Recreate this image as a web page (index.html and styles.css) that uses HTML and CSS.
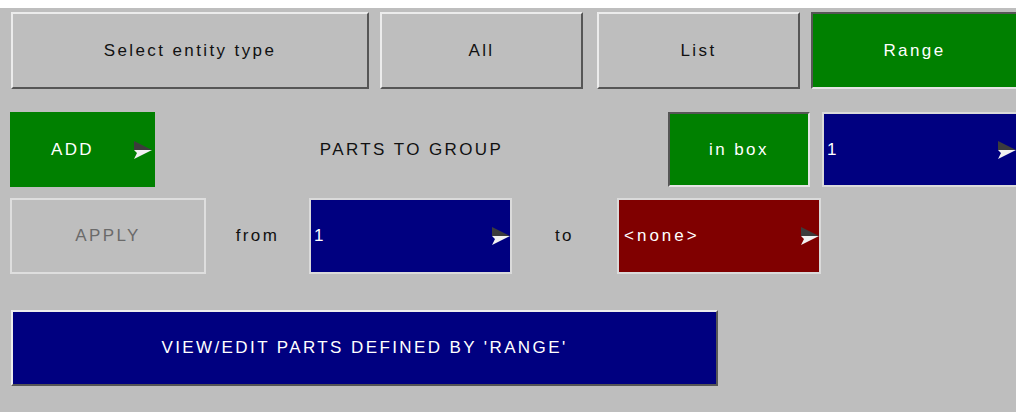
FILE: index.html
```html
<!DOCTYPE html>
<html>
<head>
<meta charset="utf-8">
<link rel="stylesheet" href="styles.css">
</head>
<body>
<div class="panel">
  <div class="row row-top">
    <div class="btn raised w-select">Select entity type</div>
    <div class="btn raised w-all">All</div>
    <div class="btn raised w-list">List</div>
    <div class="btn sunken green w-range">Range</div>
  </div>
  <div class="row row-add">
    <div class="btn green flat w-add"><span class="btn-label">ADD</span><svg class="arrow arrow-add" viewBox="0 0 20 20" width="20" height="20"><polygon points="1,1 19,10 1,10" fill="#3c3c3c"/><polygon points="1,10 19,10 1,19 4,13" fill="#f2f2f2"/></svg></div>
    <div class="label w-parts">PARTS TO GROUP</div>
    <div class="btn sunken-box green w-inbox">in box</div>
    <div class="field navy w-field-right"><span class="field-text">1</span><svg class="arrow" viewBox="0 0 20 20" width="20" height="20"><polygon points="1,1 19,10 1,10" fill="#3c3c3c"/><polygon points="1,10 19,10 1,19 4,13" fill="#f2f2f2"/></svg></div>
  </div>
  <div class="row row-apply">
    <div class="btn disabled w-apply">APPLY</div>
    <div class="label w-from">from</div>
    <div class="field navy w-from-field"><span class="field-text">1</span><svg class="arrow" viewBox="0 0 20 20" width="20" height="20"><polygon points="1,1 19,10 1,10" fill="#3c3c3c"/><polygon points="1,10 19,10 1,19 4,13" fill="#f2f2f2"/></svg></div>
    <div class="label w-to">to</div>
    <div class="field maroon w-to-field"><span class="field-text">&lt;none&gt;</span><svg class="arrow" viewBox="0 0 20 20" width="20" height="20"><polygon points="1,1 19,10 1,10" fill="#3c3c3c"/><polygon points="1,10 19,10 1,19 4,13" fill="#f2f2f2"/></svg></div>
  </div>
  <div class="row row-view">
    <div class="btn raised navy w-view">VIEW/EDIT PARTS DEFINED BY 'RANGE'</div>
  </div>
</div>
</body>
</html>
```

FILE: styles.css
```css
* { box-sizing: border-box; }

html, body {
  margin: 0;
  padding: 0;
  background: #ffffff;
  width: 1016px;
  height: 412px;
  overflow: hidden;
}

.panel {
  margin-top: 8px;
  height: 404px;
  background: #bebebe;
  font-family: "Liberation Sans", Arial, sans-serif;
  font-size: 17px;
  letter-spacing: 2.4px;
  color: #111;
  overflow: hidden;
}

.row {
  display: flex;
  align-items: stretch;
}

.row-top { margin-top: 4px; padding-left: 11px; height: 77px; }
.row-add { margin-top: 23px; padding-left: 10px; height: 75px; }
.row-apply { margin-top: 11px; padding-left: 10px; height: 76px; }
.row-view { margin-top: 36px; padding-left: 11px; height: 76px; }

.btn {
  display: flex;
  align-items: center;
  justify-content: center;
  white-space: nowrap;
}

.raised {
  border-style: solid;
  border-width: 2px;
  border-color: #ececec #565656 #565656 #ececec;
}

.sunken {
  border-style: solid;
  border-width: 2px 0 2px 2px;
  border-color: #565656 #e4e4e4 #e4e4e4 #565656;
}

.sunken-box {
  border-style: solid;
  border-width: 2px;
  border-color: #565656 #e4e4e4 #e4e4e4 #565656;
}

.flat { border: none; }

.disabled {
  border: 2px solid #dedede;
  color: #6a6a6a;
}

.green { background: #008000; color: #fff; }
.navy { background: #000080; color: #fff; }
.maroon { background: #800000; color: #fff; }

.w-select { width: 358px; }
.w-all { width: 203px; margin-left: 11px; }
.w-list { width: 203px; margin-left: 14px; }
.w-range { flex: 1; margin-left: 11px; }

.w-add {
  width: 145px;
  position: relative;
}
.btn-label { margin-right: 20px; }
.arrow-add { position: absolute; right: 2px; top: 28px; }

.label {
  display: flex;
  align-items: center;
  justify-content: center;
  white-space: nowrap;
}

.w-parts { width: 513px; }
.w-inbox { width: 142px; }

.field {
  display: flex;
  align-items: center;
  justify-content: space-between;
  border: 2px solid #dadada;
  padding-left: 3px;
  white-space: nowrap;
}
.field .arrow { margin-right: -1px; }
.field-text { letter-spacing: 3px; }

.w-field-right { width: 194px; margin-left: 12px; border-right: none; }
.w-apply { width: 196px; }
.w-from { width: 103px; }
.w-from-field { width: 203px; }
.w-to { width: 105px; }
.w-to-field { width: 204px; padding-left: 5px; }

.w-view { width: 707px; }
```
